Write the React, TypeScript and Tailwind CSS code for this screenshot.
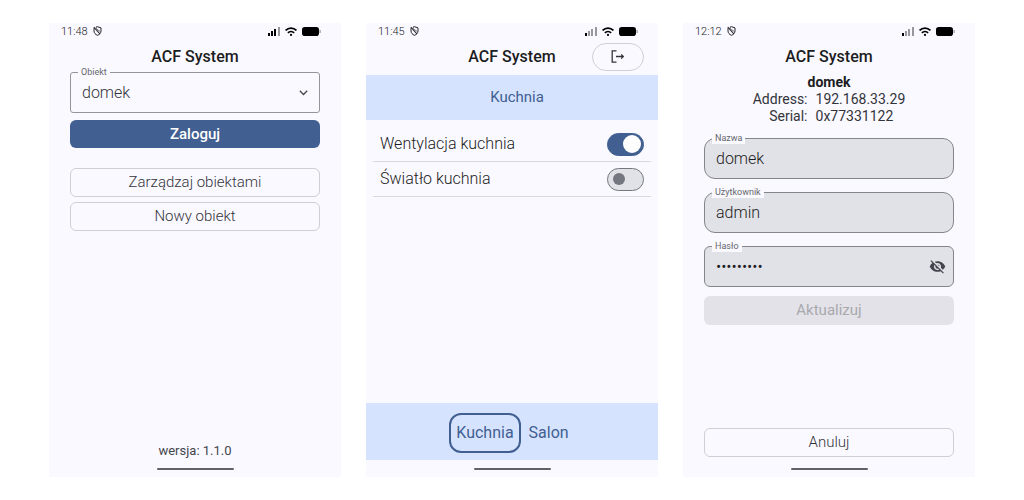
import { ReactNode, useState } from 'react';

interface StatusBarProps {
  time: string;
  signal: number;
}

const bars = [
  { x: 0, y: 6, h: 3 },
  { x: 3, y: 4, h: 5 },
  { x: 6, y: 2, h: 7 },
  { x: 10, y: 0, h: 9 },
];

function StatusBar({ time, signal }: StatusBarProps) {
  return (
    <div className="h-[18px] pb-[2px] pl-3 pr-5 flex items-center justify-between text-[11px] leading-none font-light text-[#222328]">
      <div className="flex items-center gap-[5px]">
        <span>{time}</span>
        <svg width="9" height="10" viewBox="0 0 9 10" fill="none" stroke="#222328">
          <path d="M3 1.1 4.5.7 8 1.9v3C8 6.9 6.600 8.600 4.500 9.300 2.400 8.600 1 6.900 1 4.900V2.200" strokeWidth="1" />
          <path d="M.8 1.200 7 8" strokeWidth="1.100" />
          <path d="M3.200 1.200v1.600l4 2.600" strokeWidth=".6" />
        </svg>
      </div>
      <div className="flex items-center gap-[5px]">
        <svg width="12" height="9" viewBox="0 0 12 9">
          {bars.map((bar, i) => (
            <rect key={bar.x} x={bar.x} y={bar.y} width="2" height={bar.h} fill={i < signal ? '#000' : '#97979c'} />
          ))}
        </svg>
        <svg width="12" height="9" viewBox="0 0 12 9" fill="none" stroke="#000" strokeWidth="1.800">
          <path d="M.6 3.500C3.600.3 8.400.3 11.400 3.500" />
          <path d="M2.900 5.800c1.700-1.700 4.500-1.700 6.200 0" />
          <circle cx="6" cy="7.900" r="1.100" fill="#000" stroke="none" />
        </svg>
        <svg width="19" height="9" viewBox="0 0 19 9">
          <rect width="17" height="9" rx="2.800" />
          <rect x="17.500" y="3" width="1.200" height="3" fill="#97979c" />
        </svg>
      </div>
    </div>
  );
}

interface ScreenProps extends StatusBarProps {
  action?: ReactNode;
  children: ReactNode;
}

function Screen({ time, signal, action, children }: ScreenProps) {
  return (
    <section className="flex flex-col bg-[#faf9ff]">
      <StatusBar time={time} signal={signal} />
      <header className="h-[31px] px-[14px] grid grid-cols-[1fr_auto_1fr] items-center">
        <h1 className="col-start-2 text-base leading-5 font-medium text-[#1c1d22]">ACF System</h1>
        <div className="flex justify-end">{action}</div>
      </header>
      {children}
      <div className="h-[17px] flex items-center justify-center">
        <div className="w-[77px] h-[2px] rounded-full bg-[#626166]" />
      </div>
    </section>
  );
}

interface FieldProps {
  id: string;
  label: string;
  value: string;
  type?: string;
  className: string;
  children?: ReactNode;
}

function Field({ id, label, value, type = 'text', className, children }: FieldProps) {
  const [text, setText] = useState(value);

  return (
    <div className="relative">
      <label htmlFor={id} className="absolute left-2 -top-[6px] px-[3px] bg-[#faf9ff] text-[9px] leading-3 font-normal text-[#66676d]">
        {label}
      </label>
      <input
        id={id}
        type={type}
        value={text}
        onChange={e => setText(e.target.value)}
        className={`block w-full h-[41px] px-[11px] border border-[#85868c] bg-[#e1e2e7] text-base text-[#1c1d22] outline-none ${className}`}
      />
      {children}
    </div>
  );
}

const outlined = 'h-[29px] rounded-md border border-[#cfcfd8] text-[15px] text-[#33343a]';

function LoginScreen() {
  return (
    <Screen time="11:48" signal={3}>
      <div className="flex-1 px-[21px] flex flex-col">
        <div className="relative">
          <label htmlFor="object" className="absolute left-2 -top-[6px] px-[3px] bg-[#faf9ff] text-[9px] leading-3 font-normal text-[#66676d]">
            Obiekt
          </label>
          <select
            id="object"
            className="block w-full h-[41px] px-[11px] appearance-none rounded-[3px] border border-[#94959b] text-base text-[#33343a]"
          >
            <option>domek</option>
          </select>
          <svg className="absolute right-3 top-[18px] pointer-events-none" width="9" height="6" viewBox="0 0 9 6" fill="none" stroke="#44464d" strokeWidth="1.300">
            <path d="m.8.8 3.700 3.700L8.200.8" />
          </svg>
        </div>
        <button className="mt-[7px] h-7 rounded-md bg-[#415f91] text-[15px] font-medium text-white">Zaloguj</button>
        <button className={`mt-5 ${outlined}`}>Zarządzaj obiektami</button>
        <button className={`mt-[5px] ${outlined}`}>Nowy obiekt</button>
        <p className="mt-auto mb-[1px] text-center text-[13px] leading-4 font-normal text-[#44464d]">wersja: 1.1.0</p>
      </div>
    </Screen>
  );
}

interface ToggleProps {
  id: string;
  label: string;
  initial: boolean;
}

function Toggle({ id, label, initial }: ToggleProps) {
  const [on, setOn] = useState(initial);

  return (
    <li className="h-[35px] px-[7px] flex items-center justify-between border-b border-[#d9d9e0]">
      <label htmlFor={id} className="text-base text-[#1c1d22]">{label}</label>
      <input
        id={id}
        type="checkbox"
        role="switch"
        checked={on}
        onChange={() => setOn(!on)}
        className="appearance-none w-[37px] h-[23px] px-[5px] flex items-center rounded-full border border-[#74777f] bg-[#e1e2e7] before:size-3 before:rounded-full before:bg-[#74777f] checked:px-[2px] checked:justify-end checked:border-[#415f91] checked:bg-[#415f91] checked:before:size-[18px] checked:before:bg-white"
      />
    </li>
  );
}

function RoomScreen() {
  const logout = (
    <button aria-label="Wyloguj" className="w-[52px] h-7 flex items-center justify-center rounded-full border border-[#cfcfd8]">
      <svg width="14" height="13" viewBox="0 0 14 13" fill="none" stroke="#33343a" strokeWidth="1.300">
        <path d="M5.500.8H1.200v11.400h4.300" />
        <path d="M5 6.500h7.300M10.200 4.400l2.100 2.100-2.100 2.100" />
      </svg>
    </button>
  );

  return (
    <Screen time="11:45" signal={1} action={logout}>
      <h2 className="mt-[3px] h-[45px] pl-[10px] flex items-center justify-center bg-[#d6e3ff] text-[15px] font-normal text-[#415f91]">Kuchnia</h2>
      <ul className="flex-1 px-[7px] pt-[7px]">
        <Toggle id="fan" label="Wentylacja kuchnia" initial={true} />
        <Toggle id="light" label="Światło kuchnia" initial={false} />
      </ul>
      <nav className="h-[57px] pt-[3px] pr-[6px] flex items-center justify-center gap-2 bg-[#d6e3ff] text-base font-normal text-[#415f91]">
        <a href="#kuchnia" className="h-10 px-[5px] flex items-center rounded-xl border-2 border-[#415f91]">Kuchnia</a>
        <a href="#salon">Salon</a>
      </nav>
    </Screen>
  );
}

function EditScreen() {
  return (
    <Screen time="12:12" signal={1}>
      <div className="pt-[2px] text-sm leading-[17px] font-normal text-[#33343a]">
        <p className="text-center font-bold text-[#1c1d22]">domek</p>
        <dl className="grid grid-cols-[auto_auto] justify-center gap-x-2">
          <dt className="text-right">Address:</dt>
          <dd>192.168.33.29</dd>
          <dt className="text-right">Serial:</dt>
          <dd>0x77331122</dd>
        </dl>
      </div>
      <form className="flex-1 px-[21px] pt-[13px] pb-[3px] flex flex-col" onSubmit={e => e.preventDefault()}>
        <div className="flex flex-col gap-[13px]">
          <Field id="name" label="Nazwa" value="domek" className="rounded-[11px]" />
          <Field id="user" label="Użytkownik" value="admin" className="rounded-[11px]" />
          <Field id="password" label="Hasło" value="123456789" type="password" className="rounded-md">
            <button type="button" aria-label="Pokaż hasło" className="absolute right-2 top-3">
              <svg width="17" height="17" viewBox="0 0 24 24" fill="#44464d">
                <path d="M12 7c2.760 0 5 2.240 5 5 0 .65-.13 1.260-.36 1.830l2.920 2.920c1.510-1.260 2.700-2.890 3.430-4.750-1.730-4.390-6-7.500-11-7.500-1.400 0-2.740.25-3.980.7l2.160 2.160C10.740 7.130 11.350 7 12 7zM2 4.270l2.280 2.280.46.46C3.080 8.300 1.780 10.020 1 12c1.730 4.390 6 7.500 11 7.500 1.550 0 3.030-.3 4.380-.84l.42.42L19.730 22 21 20.730 3.270 3 2 4.270zM7.530 9.800l1.550 1.550c-.05.21-.08.43-.08.65 0 1.660 1.340 3 3 3 .22 0 .44-.03.65-.08l1.550 1.550c-.67.33-1.410.53-2.200.53-2.760 0-5-2.240-5-5 0-.79.2-1.530.53-2.200zm4.310-.78l3.150 3.150.02-.16c0-1.660-1.340-3-3-3l-.17.01z" />
              </svg>
            </button>
          </Field>
        </div>
        <button disabled className="mt-[9px] h-[29px] rounded-md bg-[#e3e2e8] text-[15px] font-normal text-[#a9a9ae]">Aktualizuj</button>
        <button type="button" className={`mt-auto ${outlined}`}>Anuluj</button>
      </form>
    </Screen>
  );
}

function App() {
  return (
    <main className="min-h-screen px-[49px] py-[23px] grid grid-cols-3 gap-[25px] bg-white font-[Roboto,sans-serif] font-[350]">
      <LoginScreen />
      <RoomScreen />
      <EditScreen />
    </main>
  );
}

export default App;
